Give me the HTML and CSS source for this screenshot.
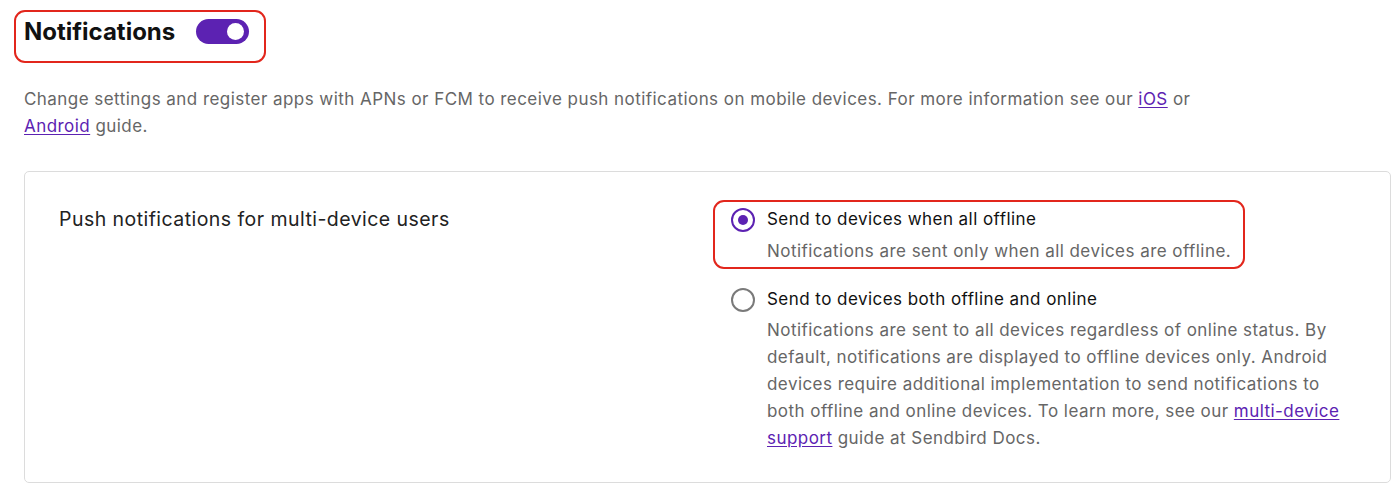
FILE: index.html
```html
<!DOCTYPE html>
<html lang="en">
<head>
<meta charset="utf-8">
<title>Notifications</title>
<link rel="stylesheet" href="styles.css">
</head>
<body>
<div class="page">
  <div class="title-row">
    <div class="title-box highlight">
      <h1 class="title">Notifications</h1>
      <span class="toggle on"><span class="knob"></span></span>
    </div>
  </div>
  <p class="intro">Change settings and register apps with APNs or FCM to receive push notifications on mobile devices. For more information see our <a href="#">iOS</a> or <a href="#">Android</a> guide.</p>

  <section class="card">
    <div class="card-label">Push notifications for multi-device users</div>
    <div class="options">
      <label class="option highlight">
        <span class="radio checked"></span>
        <span class="option-text">
          <span class="option-title">Send to devices when all offline</span>
          <span class="option-desc">Notifications are sent only when all devices are offline.</span>
        </span>
      </label>
      <label class="option">
        <span class="radio"></span>
        <span class="option-text">
          <span class="option-title">Send to devices both offline and online</span>
          <span class="option-desc">Notifications are sent to all devices regardless of online status. By default, notifications are displayed to offline devices only. Android devices require additional implementation to send notifications to both offline and online devices. To learn more, see our <a href="#">multi-device support</a> guide at Sendbird Docs.</span>
        </span>
      </label>
    </div>
  </section>
</div>
</body>
</html>
```

FILE: styles.css
```css
* { box-sizing: border-box; }
html, body { margin: 0; padding: 0; background: #ffffff; }
body {
  font-family: "Inter", "Noto Sans", sans-serif;
  color: #222222;
}
.page {
  padding: 10px 9px 0 14px;
}
.title-row { display: flex; }
.title-box {
  display: inline-flex;
  align-items: flex-start;
  gap: 21px;
  height: 53px;
  padding: 6.5px 15px 0 8px;
  border: 2.5px solid #e2261c;
  border-radius: 11px;
}
.title {
  margin: 0;
  font-size: 24px;
  line-height: 26px;
  font-weight: 700;
  color: #111111;
}
.toggle {
  position: relative;
  display: inline-block;
  width: 53px;
  height: 25px;
  border-radius: 13px;
  background: #5c22b2;
}
.toggle .knob {
  position: absolute;
  top: 4px;
  right: 5px;
  width: 17px;
  height: 17px;
  border-radius: 50%;
  background: #ffffff;
}
.intro {
  margin: 23px 0 0 10px;
  max-width: 1200px;
  font-size: 17px;
  line-height: 27px;
  letter-spacing: 0.45px;
  color: #666666;
}
a { color: #5c22b2; text-decoration: underline; text-underline-offset: 2px; }
.card {
  display: grid;
  grid-template-columns: 655px 1fr;
  margin: 31px 0 0 10px;
  padding: 28px 20px 27px 34px;
  border: 1px solid #dcdcdc;
  border-radius: 5px;
  height: 312px;
}
.card-label {
  font-size: 19.5px;
  line-height: 27px;
  letter-spacing: 0.45px;
  padding-top: 6px;
  color: #222222;
}
.options {
  display: flex;
  flex-direction: column;
  gap: 11px;
  margin-left: -1px;
}
.option {
  display: flex;
  gap: 12px;
  width: fit-content;
  max-width: 645px;
  padding: 4px 12px 2px 16px;
  border: 2.5px solid transparent;
  border-radius: 11px;
}
.option.highlight { border-color: #e2261c; }
.radio {
  flex: none;
  width: 24px;
  height: 24px;
  margin-top: 1.5px;
  border-radius: 50%;
  border: 2px solid #7a7a7a;
  display: flex;
  align-items: center;
  justify-content: center;
}
.radio.checked { border-color: #5c22b2; }
.radio.checked::after {
  content: "";
  width: 10px;
  height: 10px;
  border-radius: 50%;
  background: #5c22b2;
}
.option-text { display: flex; flex-direction: column; gap: 5px; }
.option-title {
  font-size: 17px;
  line-height: 27px;
  letter-spacing: 0.45px;
  color: #111111;
}
.option + .option .option-text { gap: 4px; }
.option-desc {
  font-size: 17px;
  line-height: 27px;
  letter-spacing: 0.45px;
  color: #666666;
}
```
